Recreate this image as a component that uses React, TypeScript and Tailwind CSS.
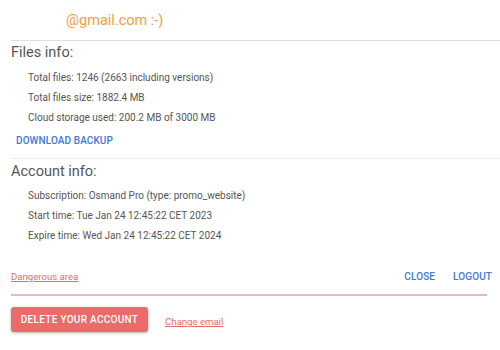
const FILES = [
  'Total files: 1246 (2663 including versions)',
  'Total files size: 1882.4 MB',
  'Cloud storage used: 200.2 MB of 3000 MB',
]

const ACCOUNT = [
  'Subscription: Osmand Pro (type: promo_website)',
  'Start time: Tue Jan 24 12:45:22 CET 2023',
  'Expire time: Wed Jan 24 12:45:22 CET 2024',
]

function InfoList({ items, className }: { items: string[]; className: string }) {
  return (
    <ul className={`flex flex-col gap-[8px] pl-[17px] text-[10px] leading-[12px] text-[#555] ${className}`}>
      {items.map((t) => (
        <li key={t}>{t}</li>
      ))}
    </ul>
  )
}

export default function App() {
  return (
    <div
      className="h-[350px] w-[500px] overflow-hidden bg-white pl-[11px]"
      style={{ fontFamily: 'Roboto, "Noto Sans", sans-serif' }}
    >
      <div className="h-[41px] border-b border-[#e0e0e0] pl-[55px] pt-[12px] text-[14.5px] leading-[18px] text-[#f0a044]">
        @gmail.com :-)
      </div>

      <h2 className="mt-[3px] text-[14.5px] leading-[18px] text-[#555]">Files info:</h2>
      <InfoList items={FILES} className="mt-[10px]" />
      <button
        type="button"
        className="ml-[5px] mt-[11px] block text-[10px] font-medium uppercase leading-[12px] tracking-[0.1px] text-[#3c78d8]"
      >
        Download backup
      </button>

      <div className="mt-[11px] h-px bg-[#ececec]" />

      <h2 className="mt-[4px] text-[14.5px] leading-[18px] text-[#555]">Account info:</h2>
      <InfoList items={ACCOUNT} className="mt-[9px]" />

      <div className="mr-[8px] mt-[29px] flex items-center justify-between">
        <a href="#" className="text-[9.6px] leading-[12px] text-[#e86a6a] underline">
          Dangerous area
        </a>
        <div className="flex gap-[18px] text-[10px] font-medium leading-[12px] tracking-[0.1px] text-[#3c78d8]">
          <button type="button">CLOSE</button>
          <button type="button">LOGOUT</button>
        </div>
      </div>
      <div className="mr-[13px] mt-[11px] h-[2px] bg-[#e9b8b8]" />

      <div className="mt-[11px] flex items-center gap-[17px]">
        <button
          type="button"
          className="h-[25px] w-[137px] rounded-[3px] bg-[#eb6a6a] text-[10px] font-medium tracking-[0.3px] text-white shadow-[0_1px_3px_rgba(0,0,0,0.3)]"
        >
          DELETE YOUR ACCOUNT
        </button>
        <a href="#" className="mt-[5px] text-[9.6px] text-[#e86a6a] underline">
          Change email
        </a>
      </div>
    </div>
  )
}
